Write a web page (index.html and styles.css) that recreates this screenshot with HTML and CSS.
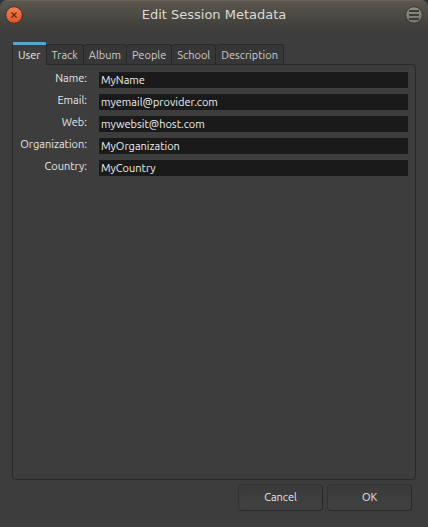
FILE: index.html
```html
<!DOCTYPE html>
<html lang="en">
<head>
<meta charset="utf-8">
<meta name="viewport" content="width=device-width, initial-scale=1">
<title>Edit Session Metadata</title>
<link rel="stylesheet" href="styles.css">
</head>
<body>
<form class="dialog">
  <header class="titlebar">
    <button class="window-button" type="button" aria-label="Close">
      <svg width="18" height="18" viewBox="0 0 18 18">
        <defs><linearGradient id="close-fill" x1="0" y1="0" x2="0" y2="1"><stop offset="0" stop-color="#f58059"/><stop offset="1" stop-color="#e4521f"/></linearGradient></defs>
        <circle cx="9" cy="9" r="8.3" fill="url(#close-fill)" stroke="#383630"/>
        <path d="M6.4 6.4l5.2 5.2M11.6 6.4l-5.2 5.2" stroke="#4a2a18" stroke-width="1.3"/>
      </svg>
    </button>
    <h1 class="title">Edit Session Metadata</h1>
    <button class="window-button" type="button" aria-label="Menu">
      <svg width="18" height="18" viewBox="0 0 18 18">
        <defs><linearGradient id="menu-fill" x1="0" y1="0" x2="0" y2="1"><stop offset="0" stop-color="#91908a"/><stop offset="1" stop-color="#74726b"/></linearGradient></defs>
        <circle cx="9" cy="9" r="8.3" fill="url(#menu-fill)" stroke="#383630"/>
        <path d="M4 5h10M4 9h10M4 13h10" stroke="#3d3b36" stroke-width="2"/>
      </svg>
    </button>
  </header>
  <main class="content">
    <div class="tabs" role="tablist">
      <button class="tab tab-active" type="button" role="tab" aria-selected="true">User</button>
      <button class="tab" type="button" role="tab" aria-selected="false">Track</button>
      <button class="tab" type="button" role="tab" aria-selected="false">Album</button>
      <button class="tab" type="button" role="tab" aria-selected="false">People</button>
      <button class="tab" type="button" role="tab" aria-selected="false">School</button>
      <button class="tab" type="button" role="tab" aria-selected="false">Description</button>
    </div>
    <section class="panel" role="tabpanel">
      <div class="fields">
        <label class="label" for="name">Name:</label>
        <input class="field" id="name" type="text" value="MyName">
        <label class="label" for="email">Email:</label>
        <input class="field" id="email" type="text" value="myemail@provider.com">
        <label class="label" for="web">Web:</label>
        <input class="field" id="web" type="text" value="mywebsit@host.com">
        <label class="label" for="organization">Organization:</label>
        <input class="field" id="organization" type="text" value="MyOrganization">
        <label class="label" for="country">Country:</label>
        <input class="field" id="country" type="text" value="MyCountry">
      </div>
    </section>
  </main>
  <footer class="actions">
    <button class="action" type="button">Cancel</button>
    <button class="action" type="submit">OK</button>
  </footer>
</form>
</body>
</html>
```
FILE: styles.css
```css
* {
  box-sizing: border-box;
}

body {
  margin: 0;
  background: #2f343b;
  color: #e8e8e8;
  font-family: Ubuntu, "Noto Sans", sans-serif;
  font-size: 11px;
  line-height: 16px;
}

button,
input {
  font: inherit;
  color: inherit;
}

.dialog {
  display: flex;
  flex-direction: column;
  min-height: 100vh;
  background: #3d3d3d;
  border-radius: 7px 7px 0 0;
  overflow: hidden;
}

.titlebar {
  display: flex;
  align-items: center;
  justify-content: space-between;
  height: 29px;
  padding: 0 5px;
  background: linear-gradient(#59574e, #3e3d39);
  border-top: 1px solid #66635a;
}

.window-button {
  display: flex;
  padding: 0;
  border: 0;
  background: none;
}

.title {
  margin: 0;
  color: #dfdbd2;
  font-family: "DejaVu Sans", sans-serif;
  font-size: 13px;
  font-weight: 400;
}

.content {
  display: flex;
  flex: 1;
  flex-direction: column;
  padding: 13px 12px 0;
}

.tabs {
  display: flex;
  align-items: flex-end;
}

.tab {
  height: 20px;
  padding: 0 5px;
  border: 1px solid #282828;
  border-left-width: 0;
  border-bottom: 0;
  border-radius: 3px 3px 0 0;
  background: #373737;
  color: #d0d0d0;
}

.tab-active {
  position: relative;
  height: 23px;
  margin-bottom: -1px;
  padding-bottom: 1px;
  border-left-width: 1px;
  border-top: 3px solid #5ca5ca;
  background: #3d3d3d;
  color: #e8e8e8;
}

.panel {
  flex: 1;
  padding: 7px;
  border: 1px solid #282828;
  border-radius: 0 4px 4px 4px;
}

.fields {
  display: grid;
  grid-template-columns: 67px 1fr;
  gap: 6px 12px;
}

.label {
  margin-top: -2px;
  text-align: right;
}

.field {
  width: 100%;
  min-width: 0;
  height: 16px;
  padding: 0 2px;
  border: 0;
  background: #1a1a1a;
  color: #f2f2f2;
}

.actions {
  display: flex;
  justify-content: flex-end;
  gap: 4px;
  padding: 4px 16px 16px;
}

.action {
  width: 85px;
  height: 27px;
  padding: 0 0 2px;
  border: 1px solid #282828;
  border-top-color: #333333;
  border-left-color: #333333;
  border-radius: 4px;
  background: linear-gradient(#3a3a3a, #414141);
}
```
